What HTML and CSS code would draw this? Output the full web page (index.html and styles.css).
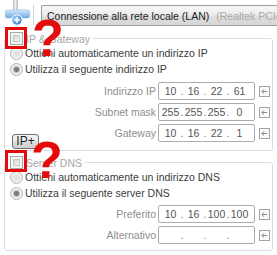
FILE: index.html
```html
<!DOCTYPE html>
<html>
<head>
<meta charset="utf-8">
<link rel="stylesheet" href="styles.css">
</head>
<body>
<div class="page">
  <div class="top">
    <svg class="net-icon" viewBox="0 0 26 26" width="26" height="26">
      <defs>
        <linearGradient id="pipe" x1="0" x2="1" y1="0" y2="0"><stop offset="0" stop-color="#b4c0c9"/><stop offset=".5" stop-color="#eef2f5"/><stop offset="1" stop-color="#a8b4be"/></linearGradient>
        <linearGradient id="bar" x1="0" y1="0" x2="0" y2="1"><stop offset="0" stop-color="#d4e9fb"/><stop offset="1" stop-color="#6ea9df"/></linearGradient>
        <radialGradient id="ball" cx=".4" cy=".35" r=".7"><stop offset="0" stop-color="#a6d4ff"/><stop offset="1" stop-color="#2f7bd3"/></radialGradient>
      </defs>
      <rect x="8" y="0" width="5" height="11" fill="url(#pipe)"/>
      <rect x="0.3" y="10" width="24.5" height="8" rx="2" fill="url(#bar)" stroke="#8dbbe4" stroke-width=".6"/>
      <circle cx="12" cy="20" r="5.2" fill="url(#ball)" stroke="#ffffff" stroke-width="1"/>
      <path d="M12 17.2v5.6M9.2 20h5.6" stroke="#ffffff" stroke-width="1.6"/>
    </svg>
    <div class="sep"></div>
    <div class="combo"><span class="combo-main">Connessione alla rete locale (LAN)</span><span class="combo-dim">(Realtek PCIe GBE Family Controller)</span></div>
  </div>

  <div class="group group-ip">
    <div class="legend"><span class="check"></span><span class="legend-text">IP &amp; Gateway</span></div>
    <div class="radio-row"><span class="radio"></span><span>Ottieni automaticamente un indirizzo IP</span></div>
    <div class="radio-row"><span class="radio on"></span><span>Utilizza il seguente indirizzo IP</span></div>
    <div class="fields fields-ip">
      <div class="field-row">
        <span class="field-label">Indirizzo IP</span>
        <div class="ip"><span class="seg">10</span><span class="dot">.</span><span class="seg">16</span><span class="dot">.</span><span class="seg">22</span><span class="dot">.</span><span class="seg">61</span></div>
        <svg class="arrow-btn" viewBox="0 0 11 11" width="11" height="11"><rect x="0.5" y="0.5" width="10" height="10" fill="#fbfbfb" stroke="#a4a4a4"/><path d="M8.2 5.5H3M5 3.3L2.8 5.5L5 7.7" fill="none" stroke="#8a8a8a" stroke-width="1"/></svg>
      </div>
      <div class="field-row">
        <span class="field-label">Subnet mask</span>
        <div class="ip"><span class="seg">255</span><span class="dot">.</span><span class="seg">255</span><span class="dot">.</span><span class="seg">255</span><span class="dot">.</span><span class="seg">0</span></div>
        <svg class="arrow-btn" viewBox="0 0 11 11" width="11" height="11"><rect x="0.5" y="0.5" width="10" height="10" fill="#fbfbfb" stroke="#a4a4a4"/><path d="M8.2 5.5H3M5 3.3L2.8 5.5L5 7.7" fill="none" stroke="#8a8a8a" stroke-width="1"/></svg>
      </div>
      <div class="field-row with-btn">
        <button class="ipplus">IP+</button>
        <div class="field-row">
          <span class="field-label">Gateway</span>
          <div class="ip"><span class="seg">10</span><span class="dot">.</span><span class="seg">16</span><span class="dot">.</span><span class="seg">22</span><span class="dot">.</span><span class="seg">1</span></div>
          <svg class="arrow-btn" viewBox="0 0 11 11" width="11" height="11"><rect x="0.5" y="0.5" width="10" height="10" fill="#fbfbfb" stroke="#a4a4a4"/><path d="M8.2 5.5H3M5 3.3L2.8 5.5L5 7.7" fill="none" stroke="#8a8a8a" stroke-width="1"/></svg>
        </div>
      </div>
    </div>
  </div>

  <div class="group group-dns">
    <div class="legend"><span class="check"></span><span class="legend-text">Server DNS</span></div>
    <div class="radio-row"><span class="radio"></span><span>Ottieni automaticamente un indirizzo DNS</span></div>
    <div class="radio-row"><span class="radio on"></span><span>Utilizza il seguente server DNS</span></div>
    <div class="fields fields-dns">
      <div class="field-row">
        <span class="field-label">Preferito</span>
        <div class="ip"><span class="seg">10</span><span class="dot">.</span><span class="seg">16</span><span class="dot">.</span><span class="seg">100</span><span class="dot">.</span><span class="seg">100</span></div>
        <svg class="arrow-btn" viewBox="0 0 11 11" width="11" height="11"><rect x="0.5" y="0.5" width="10" height="10" fill="#fbfbfb" stroke="#a4a4a4"/><path d="M8.2 5.5H3M5 3.3L2.8 5.5L5 7.7" fill="none" stroke="#8a8a8a" stroke-width="1"/></svg>
      </div>
      <div class="field-row">
        <span class="field-label">Alternativo</span>
        <div class="ip"><span class="seg"></span><span class="dot">.</span><span class="seg"></span><span class="dot">.</span><span class="seg"></span><span class="dot">.</span><span class="seg"></span></div>
        <svg class="arrow-btn" viewBox="0 0 11 11" width="11" height="11"><rect x="0.5" y="0.5" width="10" height="10" fill="#fbfbfb" stroke="#a4a4a4"/><path d="M8.2 5.5H3M5 3.3L2.8 5.5L5 7.7" fill="none" stroke="#8a8a8a" stroke-width="1"/></svg>
      </div>
    </div>
  </div>

  <div class="redbox redbox-ip"></div>
  <div class="qmark qmark-ip">?</div>
  <div class="redbox redbox-dns"></div>
  <div class="qmark qmark-dns">?</div>
</div>
</body>
</html>
```

FILE: styles.css
```css
html, body {
  margin: 0;
  padding: 0;
}

body {
  width: 277px;
  height: 255px;
  overflow: hidden;
  background: #ffffff;
  font-family: "Liberation Sans", Arial, sans-serif;
  font-size: 10.5px;
  color: #3a3a3a;
}

.page {
  position: relative;
  width: 277px;
  height: 255px;
  overflow: hidden;
}

.top {
  display: flex;
  height: 38px;
  padding-left: 5px;
  box-sizing: border-box;
}

.net-icon {
  flex: none;
  width: 26px;
  height: 26px;
}

.sep {
  flex: none;
  width: 1px;
  height: 20px;
  margin: 5px 0 0 2px;
  background: #d4d4d4;
}

.combo {
  flex: none;
  width: 262px;
  height: 21px;
  margin: 5px 0 0 7px;
  box-sizing: border-box;
  border: 1px solid #9c9c9c;
  border-right: none;
  border-radius: 2px 0 0 2px;
  background: linear-gradient(#f7f7f7, #ededed 45%, #dedede 55%, #d6d6d6);
  padding: 1px 0 0 5px;
  line-height: 18px;
  white-space: nowrap;
  overflow: hidden;
  color: #1c1c1c;
}

.combo-dim {
  color: #a9a9a9;
  margin-left: 7px;
}

.group {
  margin: 0 4px;
  border: 1px solid #d5dfe5;
  border-radius: 3px;
  padding: 0 2px 0 5px;
}

.group-ip {
  padding-bottom: 1px;
}

.group-dns {
  margin-top: 11px;
  padding-bottom: 6px;
}

.legend {
  display: flex;
  align-items: center;
  width: max-content;
  height: 13px;
  margin: -7px 0 0 -2px;
  padding: 0 3px 0 2px;
  background: #ffffff;
}

.legend-text {
  margin-left: 3px;
  color: #a6a6a6;
}

.check {
  flex: none;
  display: flex;
  width: 13px;
  height: 13px;
  box-sizing: border-box;
  padding: 2px;
  border: 1px solid #a8a8a8;
  background: #f6f6f6;
}

.check::after {
  content: "";
  flex: 1;
  border: 1px solid #c8c8c8;
  background: linear-gradient(135deg, #d4d4d4, #f6f6f6);
}

.radio-row {
  display: flex;
  align-items: center;
  height: 16px;
  color: #3c3c3c;
  white-space: nowrap;
}

.radio {
  flex: none;
  display: flex;
  align-items: center;
  justify-content: center;
  width: 13px;
  height: 13px;
  box-sizing: border-box;
  margin-right: 2px;
  border: 1px solid #b2b2b2;
  border-radius: 50%;
  background: radial-gradient(circle, #e2e2e2 30%, #f9f9f9 80%);
}

.radio.on::after {
  content: "";
  width: 5px;
  height: 5px;
  border-radius: 50%;
  background: #7c7c7c;
  box-shadow: 0 0 0 1px #c4c4c4;
}

.fields {
  display: flex;
  flex-direction: column;
  gap: 3px;
}

.fields-ip {
  margin-top: 5px;
}

.fields-dns {
  margin-top: 4px;
}

.field-row {
  display: flex;
  align-items: center;
  justify-content: flex-end;
  height: 18px;
}

.field-row.with-btn {
  height: auto;
  align-items: flex-start;
  justify-content: space-between;
}

.field-label {
  margin-right: 2px;
  color: #8e8e8e;
  white-space: nowrap;
}

.ip {
  flex: none;
  display: flex;
  align-items: center;
  width: 97px;
  height: 18px;
  box-sizing: border-box;
  padding-left: 2px;
  border: 1px solid #abadb3;
  border-radius: 2px;
  background: #ffffff;
  color: #555555;
}

.seg {
  width: 19px;
  text-align: center;
}

.dot {
  width: 4px;
  text-align: center;
  color: #7a7a7a;
}

.arrow-btn {
  flex: none;
  width: 11px;
  height: 11px;
  margin-left: 4px;
}

.ipplus {
  flex: none;
  width: 27px;
  height: 15px;
  margin: 10px 0 0 2px;
  padding: 0;
  box-sizing: border-box;
  border: 1px solid #707070;
  border-radius: 3px;
  background: linear-gradient(#f4f4f4, #ececec 48%, #dcdcdc 52%, #cfcfcf);
  font-family: "Liberation Sans", Arial, sans-serif;
  font-size: 12px;
  line-height: 13px;
  color: #1e1e1e;
}

.redbox {
  position: absolute;
  left: 5px;
  width: 22px;
  height: 22px;
  box-sizing: border-box;
  border: 3px solid #e50b0b;
}

.redbox-ip {
  top: 27px;
}

.redbox-dns {
  top: 150px;
}

.qmark {
  position: absolute;
  font-family: "Liberation Sans", Arial, sans-serif;
  font-weight: bold;
  font-size: 52px;
  line-height: 52px;
  color: #e50b0b;
}

.qmark-ip {
  top: 12px;
  left: 32px;
}

.qmark-dns {
  top: 134px;
  left: 31px;
}
```
